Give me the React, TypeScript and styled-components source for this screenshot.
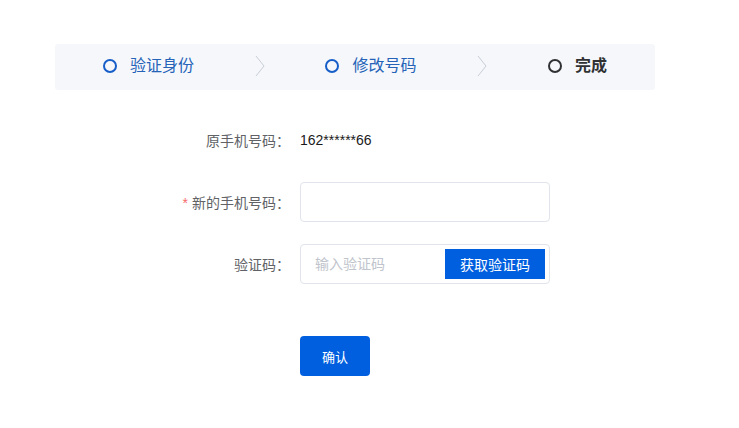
import React from 'react'
import styled, { createGlobalStyle } from 'styled-components'

const GlobalStyle = createGlobalStyle`
  html, body {
    margin: 0;
    padding: 0;
    background: #fff;
    font-family: "Liberation Sans", "Noto Sans CJK SC", sans-serif;
  }
`

const Page = styled.div`
  padding: 44px 0 0 55px;
  width: 600px;
`

const Steps = styled.div`
  display: flex;
  align-items: center;
  justify-content: space-between;
  box-sizing: border-box;
  height: 46px;
  padding: 0 48px 2px;
  background-color: #f5f7fb;
  border-radius: 3px;
`

const Step = styled.div<{ $done?: boolean }>`
  display: flex;
  align-items: center;
  gap: 13px;
  font-size: 16px;
  line-height: 20px;
  color: ${p => (p.$done ? '#2563b8' : '#303133')};
  font-weight: ${p => (p.$done ? 400 : 700)};
`

const Dot = styled.span<{ $done?: boolean }>`
  width: 10px;
  height: 10px;
  border-radius: 50%;
  border: 2px solid ${p => (p.$done ? '#175ec8' : '#303133')};
`

const Chevron = () => (
  <svg width="10" height="22" viewBox="0 0 10 22">
    <path d="M1 1 L9 11 L1 21" fill="none" stroke="#c9ced6" strokeWidth="1" />
  </svg>
)

const Form = styled.div`
  display: flex;
  flex-direction: column;
  gap: 22px;
  margin-top: 30px;
`

const Row = styled.div<{ $extra?: number }>`
  display: flex;
  align-items: center;
  height: 40px;
  margin-top: ${p => p.$extra ?? 0}px;
`

const Label = styled.label`
  width: 235px;
  padding-right: 10px;
  text-align: right;
  font-size: 14px;
  color: #606266;
`

const Required = styled.span`
  color: #f56c6c;
  margin-right: 4px;
`

const Value = styled.span`
  font-size: 14px;
  color: #1a1a1a;
`

const InputBox = styled.div`
  display: flex;
  align-items: center;
  box-sizing: border-box;
  width: 250px;
  height: 40px;
  padding: 0 4px 0 14px;
  border: 1px solid #e1e4ea;
  border-radius: 4px;
`

const Input = styled.input`
  flex: 1;
  min-width: 0;
  padding: 0;
  border: none;
  outline: none;
  font-family: inherit;
  font-size: 14px;
  color: #303133;
  background: transparent;
  &::placeholder {
    color: #c0c4cc;
  }
`

const CodeButton = styled.button`
  width: 100px;
  height: 30px;
  border: none;
  border-radius: 0;
  background-color: #005fdf;
  color: #fff;
  font-family: inherit;
  font-size: 14px;
  cursor: pointer;
`

const Submit = styled.button`
  width: 70px;
  height: 40px;
  border: none;
  border-radius: 4px;
  background-color: #005fdf;
  color: #fff;
  font-family: inherit;
  font-size: 13px;
  cursor: pointer;
`

const App = () => {
  const steps = [
    { title: '验证身份', done: true },
    { title: '修改号码', done: true },
    { title: '完成', done: false },
  ]

  return (
    <>
      <GlobalStyle />
      <Page>
        <Steps>
          {steps.map((s, i) => (
            <React.Fragment key={s.title}>
              {i > 0 && <Chevron />}
              <Step $done={s.done}>
                <Dot $done={s.done} />
                {s.title}
              </Step>
            </React.Fragment>
          ))}
        </Steps>
        <Form>
          <Row>
            <Label>原手机号码：</Label>
            <Value>162******66</Value>
          </Row>
          <Row>
            <Label>
              <Required>*</Required>新的手机号码：
            </Label>
            <InputBox>
              <Input />
            </InputBox>
          </Row>
          <Row>
            <Label>验证码：</Label>
            <InputBox>
              <Input placeholder="输入验证码" />
              <CodeButton>获取验证码</CodeButton>
            </InputBox>
          </Row>
          <Row $extra={30}>
            <Label />
            <Submit>确认</Submit>
          </Row>
        </Form>
      </Page>
    </>
  )
}

export default App
